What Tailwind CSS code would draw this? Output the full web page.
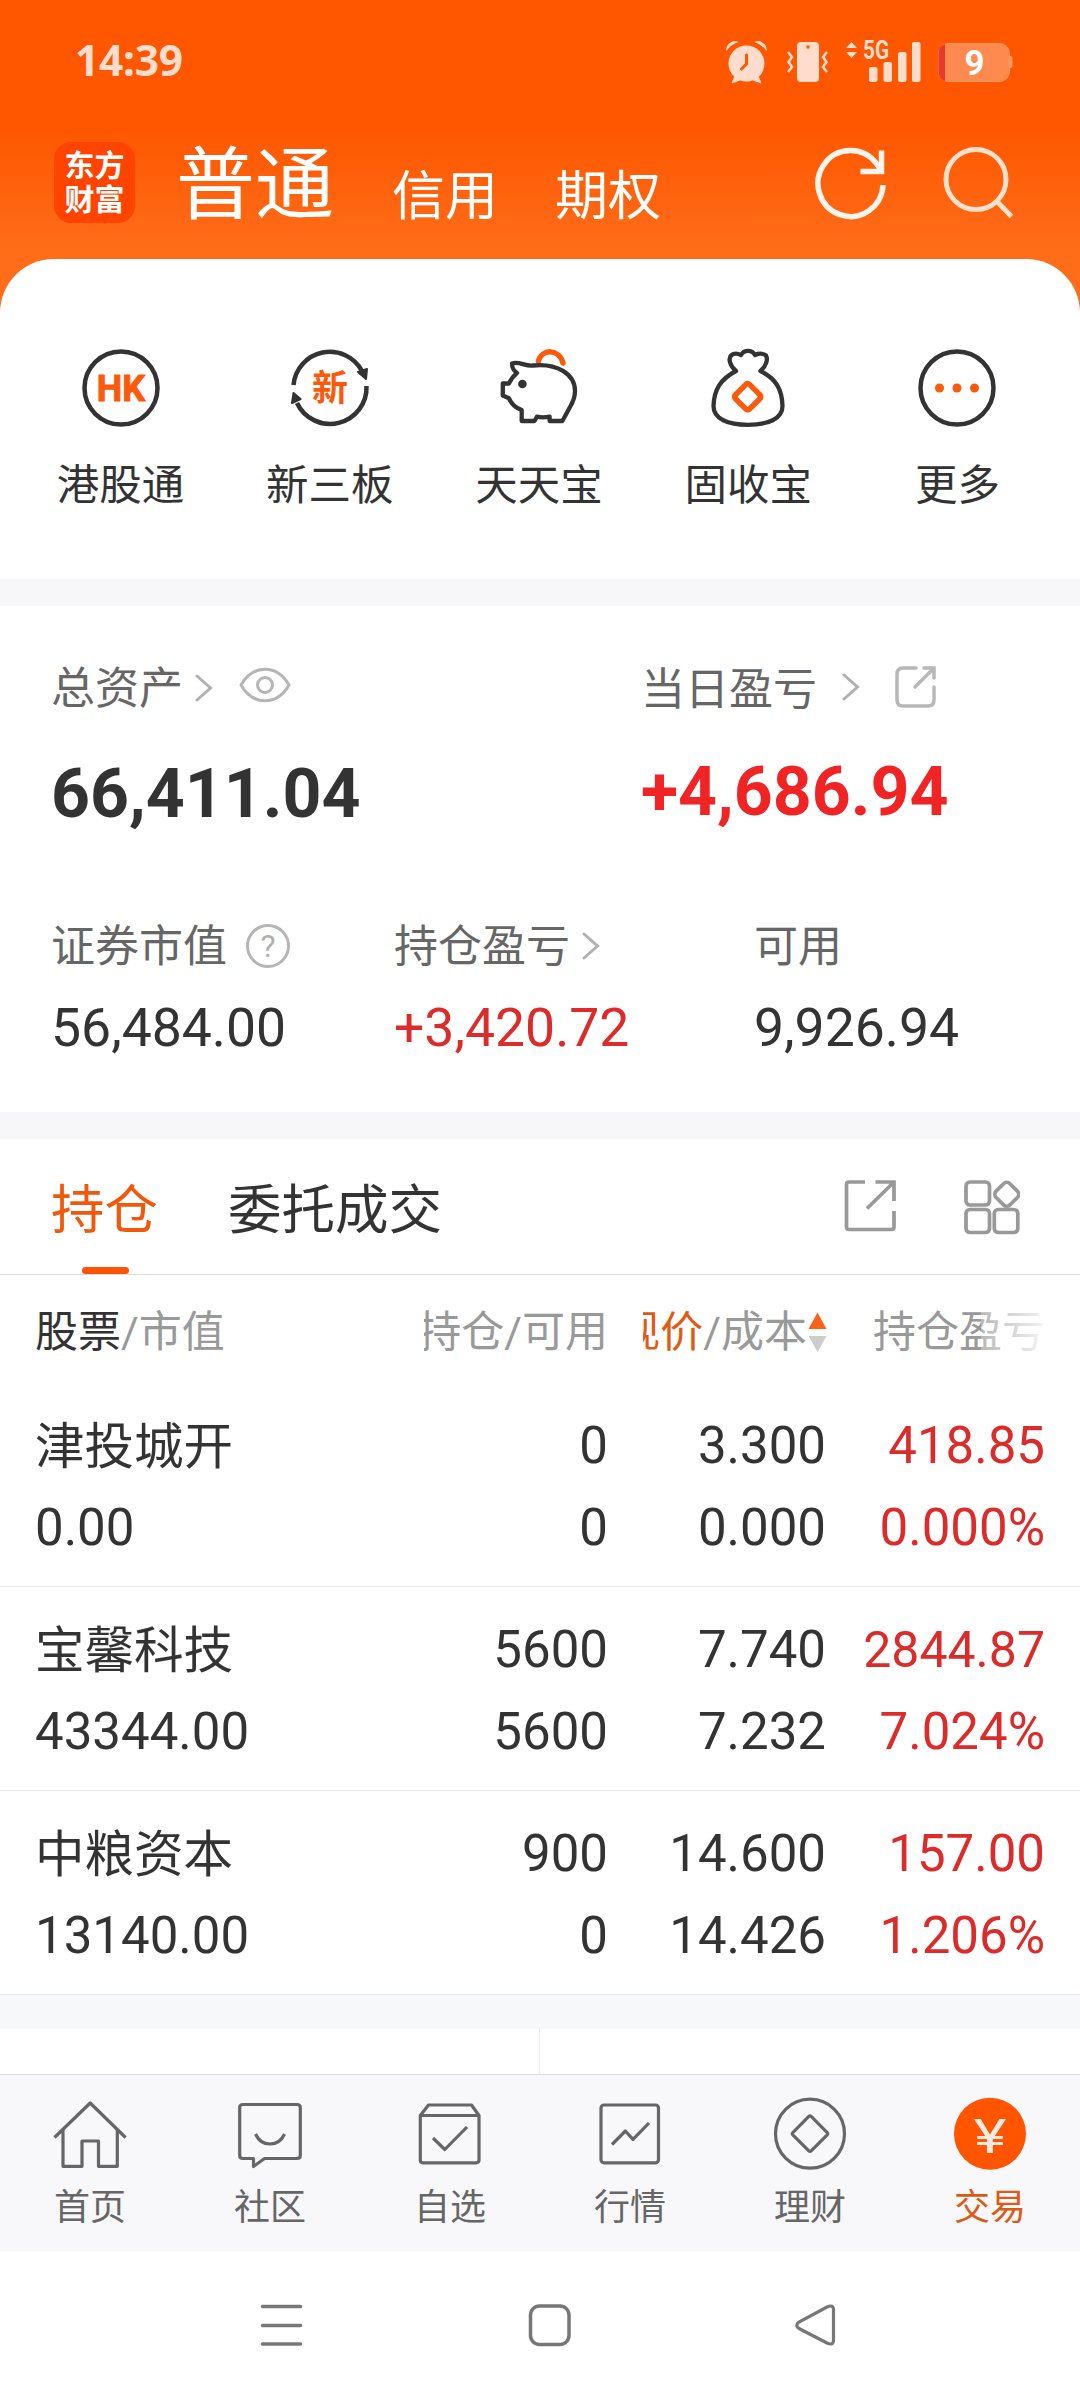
<!DOCTYPE html>
<html lang="zh">
<head>
  <meta charset="UTF-8">
  <meta name="viewport" content="width=device-width, initial-scale=1.0">
  <title>交易</title>
  <script src="https://cdn.jsdelivr.net/npm/@tailwindcss/browser@4"></script>
</head>
<body class="bg-white text-[#333] font-[Roboto,'Noto_Sans_CJK_SC',sans-serif] w-[1080px] h-[2400px] overflow-hidden">

  <div class="h-[579px] bg-[linear-gradient(to_bottom,#ff5600_125px,#ff6d19_250px)]">
    <!-- 状态栏 -->
    <div class="h-[123px] flex items-center justify-between pl-[75px] pr-[66px]">
      <div class="text-[42.5px] leading-none font-bold text-[#ffdccb] font-['Noto_Sans',sans-serif] tracking-[-0.3px] pb-[3px]">14:39</div>
      <div class="flex items-center text-[#ffdccb]">
        <svg class="w-[46px] h-[48px]" viewBox="0 0 46 48" fill="currentColor">
          <circle cx="22.500" cy="25.500" r="18"/>
          <path d="M2.500 13Q1.500 8 6 5Q10 1.500 14.500 4Q6 7 2.500 13ZM42.500 13Q43.500 8 39 5Q35 1.500 30.500 4Q39 7 42.500 13Z"/>
          <path d="M11 38L8 45L16 42ZM34 38L37 45L29 42Z" stroke="currentColor" stroke-linejoin="round"/>
          <path d="M22.500 17V26L17.500 31" fill="none" stroke="#ff5600" stroke-width="3" stroke-linecap="round"/>
        </svg>
        <svg class="w-[44px] h-[48px] ml-[16px]" viewBox="0 0 44 48" fill="currentColor">
          <rect x="11" y="4" width="22" height="40" rx="4"/>
          <circle cx="22" cy="9" r="1.700" fill="#ff5600"/>
          <path d="M2 14L6 19L2.500 24L6 29L2 34M41 14L37 19L40.500 24L37 29L41 34" fill="none" stroke="currentColor" stroke-width="2.500"/>
        </svg>
        <svg class="w-[80px] h-[48px] ml-[14px] overflow-visible" viewBox="0 0 80 48" fill="currentColor">
          <path d="M2 10L7.500 4L13 10ZM2 14L7.500 20L13 14Z"/>
          <text x="19" y="21" font-size="25" font-weight="700" textLength="26" lengthAdjust="spacingAndGlyphs">5G</text>
          <rect x="25" y="29" width="8.500" height="15" rx="2"/>
          <rect x="39.500" y="24" width="8.500" height="20" rx="2"/>
          <rect x="54" y="14" width="8.500" height="30" rx="2"/>
          <rect x="68" y="4" width="8.500" height="40" rx="2"/>
        </svg>
        <svg class="w-[78px] h-[48px] ml-[11px] mr-px" viewBox="0 0 78 48">
          <path d="M74 18h1.500q2 0 2 2v8q0 2-2 2H74z" fill="#ff9a66"/>
          <rect x="3.500" y="5.500" width="71" height="38" rx="10" fill="#ff8a4f" stroke="#ff9a66"/>
          <path d="M10 6V43Q3.500 41 3.500 33V16Q3.500 8 10 6Z" fill="#ea3a2c"/>
          <text x="39.500" y="36.500" font-size="35" font-weight="700" text-anchor="middle" fill="#fff">9</text>
        </svg>
      </div>
    </div>

    <!-- 账户切换 -->
    <div class="h-[136px] pb-[17px] flex items-center pl-[54px] text-white">
      <div class="w-[81px] h-[81px] rounded-[17px] bg-[#ff4400] flex flex-col items-center justify-center text-[30px] leading-[34px] font-bold">
        <span>东方</span>
        <span>财富</span>
      </div>
      <div class="ml-[41px] mt-[8px] text-[79px] leading-none">普通</div>
      <div class="ml-[58px] mt-[29px] text-[53px] leading-none">信用</div>
      <div class="ml-[57px] mt-[29px] text-[53px] leading-none">期权</div>
      <svg class="w-[80px] h-[80px] ml-[149px] mb-px" viewBox="0 0 80 80" fill="none" stroke="#fff4ea" stroke-width="5.500">
        <path d="M73 43A32.500 33 0 1 1 66 21L71 28"/>
        <path d="M71.500 8.500V29.500H50.500"/>
      </svg>
      <svg class="w-[80px] h-[80px] ml-[48px] mb-px" viewBox="0 0 80 80" fill="none" stroke="#ffe0cb" stroke-width="5">
        <circle cx="38" cy="37.500" r="30"/>
        <path d="M58 58.500L73.500 74.500"/>
      </svg>
    </div>

    <!-- 快捷入口 -->
    <div class="h-[320px] bg-white rounded-t-[54px] pl-[16px] pr-[18px] pt-[87px] grid grid-cols-5 text-[42.5px] leading-[60px]">
      <div class="flex flex-col items-center">
        <svg class="w-[84px] h-[84px]" viewBox="0 0 84 84">
          <circle cx="42" cy="42" r="36.500" fill="none" stroke="#333" stroke-width="4.500"/>
          <text x="42" y="55" font-size="36" font-weight="700" text-anchor="middle" fill="#fb5a0c" stroke="#fb5a0c" stroke-linejoin="round">HK</text>
        </svg>
        <span class="mt-[26px]">港股通</span>
      </div>
      <div class="flex flex-col items-center">
        <svg class="w-[84px] h-[84px]" viewBox="0 0 84 84">
          <path d="M5.500 39A36.500 36.500 0 0 1 74 25M78.500 40A36.500 36.500 0 0 1 9 57" fill="none" stroke="#333" stroke-width="4.500"/>
          <path d="M70 26L79 23L78 33ZM4 57L5.500 47L12.600 53Z" fill="#333" stroke="#333" stroke-width="2" stroke-linejoin="round"/>
          <text x="42" y="55" font-size="36" font-weight="700" text-anchor="middle" fill="#fb5a0c">新</text>
        </svg>
        <span class="mt-[26px]">新三板</span>
      </div>
      <div class="flex flex-col items-center">
        <svg class="w-[84px] h-[84px]" viewBox="0 0 84 84" fill="none" stroke="#333" stroke-width="4.300" stroke-linejoin="round">
          <path d="M41.500 15C45 2.500 62 2.500 66 17" stroke="#fb5a0c" stroke-width="5.500" stroke-linecap="round"/>
          <path d="M15 17.500C22 15 28 20.500 36 19.500C60 17 78 28 78 45C78 52 76 56 73 61L65.400 75H52.600V70.700C48 71.500 44 71.500 40 70.700L37.500 75H24.700V64C19 62 14 57 12 52.300L5.800 49.500V37.500H12C14 33 16 30 20 27C16 24 15 22 15 17.500Z"/>
          <circle cx="25.400" cy="38" r="4.300" fill="#333" stroke="none"/>
        </svg>
        <span class="mt-[26px]">天天宝</span>
      </div>
      <div class="flex flex-col items-center">
        <svg class="w-[84px] h-[84px]" viewBox="0 0 84 84" fill="none" stroke="#333" stroke-width="4.300" stroke-linejoin="round">
          <path d="M30 25C24 20 22 13 25 9.500C28 7 32 7.500 35 9C38 3.500 46 3.500 49 9C52 7.500 57 7 60 9.500C62 13 60.500 20 54.500 25C70 33 76 43 76.500 60C76.500 73 62 78.800 42 78.800C22 78.800 7.500 73 7.500 60C8 43 15 33 30 25Z"/>
          <rect x="31.700" y="40.700" width="20" height="20" rx="2.500" transform="rotate(45 41.700 50.700)" stroke="#fb5a0c" stroke-width="5.500"/>
        </svg>
        <span class="mt-[26px]">固收宝</span>
      </div>
      <div class="flex flex-col items-center">
        <svg class="w-[84px] h-[84px]" viewBox="0 0 84 84">
          <circle cx="42" cy="42" r="36.500" fill="none" stroke="#333" stroke-width="4.500"/>
          <g fill="#fb5a0c">
            <circle cx="24.500" cy="42" r="4.500"/>
            <circle cx="42" cy="42" r="4.500"/>
            <circle cx="59.500" cy="42" r="4.500"/>
          </g>
        </svg>
        <span class="mt-[26px]">更多</span>
      </div>
    </div>
  </div>

  <div class="h-[27px] bg-[#f7f7fa]"></div>

  <!-- 资产 -->
  <div class="h-[506px] pl-[51px] pt-[52px]">
    <div class="grid grid-cols-[590px_1fr]">
      <div>
        <div class="h-[60px] flex items-center text-[44px] leading-none text-[#666]">
          <span class="mt-[2px]">总资产</span>
          <svg class="w-[18px] h-[28px] ml-[12px]" viewBox="0 0 18 28" fill="none" stroke="#b0b0b0" stroke-width="3" stroke-linecap="round"><path d="M2 2L15.500 14L2 26"/></svg>
          <svg class="w-[52px] h-[36px] ml-[26px] mb-[6px]" viewBox="0 0 52 36" fill="none" stroke="#b5b5b5" stroke-width="3">
            <path d="M2 18C14 -3 38 -3 50 18C38 39 14 39 2 18Z" stroke-linejoin="round"/>
            <circle cx="26" cy="18" r="7.500"/>
          </svg>
        </div>
        <div class="mt-[36px] h-[80px] leading-[80px] text-[68px] font-bold">66,411.04</div>
      </div>
      <div>
        <div class="h-[60px] flex items-center text-[44px] leading-none text-[#666]">
          <span class="mt-[3px]">当日盈亏</span>
          <svg class="w-[18px] h-[28px] ml-[25px] mb-[3px]" viewBox="0 0 18 28" fill="none" stroke="#b0b0b0" stroke-width="3" stroke-linecap="round"><path d="M2 2L15.500 14L2 26"/></svg>
          <svg class="w-[43px] h-[43px] ml-[34px] mb-[4px]" viewBox="0 0 43 43" fill="none" stroke="#b8b8b8" stroke-width="3.500" stroke-linecap="round">
            <path d="M22 3H9Q3 3 3 9V35Q3 41 9 41H34Q40 41 40 35V22"/>
            <path d="M30 3H40V13M40 3L21 22"/>
          </svg>
        </div>
        <div class="mt-[34px] h-[80px] leading-[80px] text-[68px] font-bold text-[#f02424]">+4,686.94</div>
      </div>
    </div>
    <div class="mt-[82px] grid grid-cols-[343px_360px_1fr]">
      <div>
        <div class="h-[60px] flex items-center text-[44px] leading-none text-[#666]">
          <span class="mt-[2px]">证券市值</span>
          <svg class="w-[46px] h-[46px] ml-[18px]" viewBox="0 0 46 46">
            <circle cx="23" cy="23" r="20.500" fill="none" stroke="#b5b5b5" stroke-width="3"/>
            <text x="23" y="34" font-size="32" text-anchor="middle" fill="#b0b0b0">?</text>
          </svg>
        </div>
        <div class="mt-[22px] h-[60px] leading-[60px] text-[53.5px]">56,484.00</div>
      </div>
      <div>
        <div class="h-[60px] flex items-center text-[44px] leading-none text-[#666]">
          <span class="mt-[2px]">持仓盈亏</span>
          <svg class="w-[18px] h-[28px] ml-[12px]" viewBox="0 0 18 28" fill="none" stroke="#b0b0b0" stroke-width="3" stroke-linecap="round"><path d="M2 2L15.500 14L2 26"/></svg>
        </div>
        <div class="mt-[22px] h-[60px] leading-[60px] text-[53.5px] text-[#dc2b2b]">+3,420.72</div>
      </div>
      <div>
        <div class="h-[60px] flex items-center text-[44px] leading-none text-[#666]"><span class="mt-[2px]">可用</span></div>
        <div class="mt-[22px] h-[60px] leading-[60px] text-[53.5px]">9,926.94</div>
      </div>
    </div>
  </div>

  <div class="h-[27px] bg-[#f7f7fa]"></div>

  <!-- 标签 -->
  <div class="h-[136px] border-b border-[#dcdcdc] flex items-center pl-[51px] text-[53.5px] leading-none">
    <div class="relative h-full flex items-center pt-[9px] text-[#f1580c]">
      持仓
      <div class="absolute bottom-0 left-[31px] w-[47px] h-[7px] rounded-full bg-[#fb5505]"></div>
    </div>
    <div class="ml-[70px] pt-[9px]">委托成交</div>
    <svg class="w-[56px] h-[56px] ml-[400px] mb-[4px]" viewBox="0 0 56 56" fill="none" stroke="#999" stroke-width="3.700">
      <path d="M23 5H7Q4.500 5 4.500 7.500V50Q4.500 52.500 7 52.500H49.500Q52 52.500 52 50V34"/>
      <path d="M33.500 5H52V24M51 6L25 31.500"/>
    </svg>
    <svg class="w-[58px] h-[58px] ml-[64px]" viewBox="0 0 58 58" fill="none" stroke="#999" stroke-width="3.700">
      <rect x="4" y="4" width="23.500" height="23" rx="4"/>
      <rect x="4" y="31.500" width="23.500" height="23" rx="4"/>
      <rect x="32.300" y="31.500" width="23.500" height="23" rx="4"/>
      <rect x="35" y="6.500" width="19.500" height="19.500" rx="4.500" transform="rotate(45 44.700 16.300)"/>
    </svg>
  </div>

  <!-- 表头 -->
  <div class="h-[108px] pl-[35px] grid grid-cols-[365px_208px_219px_218px] items-start pt-[27px] text-[43px] leading-[60px] text-[#999] whitespace-nowrap">
    <div><span class="text-[#333]">股票</span>/市值</div>
    <div class="w-[184px] ml-auto flex justify-end overflow-hidden">持仓/可用</div>
    <div class="w-[184px] ml-auto flex justify-end items-center overflow-hidden">
      <span class="text-[#e05a14]">现价</span>/成本
      <svg class="shrink-0 w-[19px] h-[42px] ml-px" viewBox="0 0 19 42">
        <path d="M9.500 1.500L18.500 18H0.500Z" fill="#f8621a"/>
        <path d="M9.500 41L18.500 25H0.500Z" fill="#ccc"/>
      </svg>
    </div>
    <div class="text-right relative">
      持仓盈亏
      <div class="absolute right-0 top-0 w-[64px] h-full bg-linear-to-r from-white/30 to-white/90"></div>
    </div>
  </div>

  <!-- 持仓列表 -->
  <div id="holdings"></div>

  <div class="h-[34px] bg-[#f7f8fa]"></div>
  <div class="h-[45px] grid grid-cols-2">
    <div class="border-r border-[#ececec]"></div>
    <div></div>
  </div>

  <!-- 底部导航栏 -->
  <div class="h-[177px] bg-[#f8f8fa] border-t border-[#ddd] grid grid-cols-6 text-[36px] leading-[50px] text-[#666]">
    <a class="flex flex-col items-center pt-[19px]">
      <svg class="w-[80px] h-[80px]" viewBox="0 0 80 80" fill="none" stroke="currentColor" stroke-width="3.200">
        <path d="M4.500 43.500L40.200 9L75.500 43.500M13 36V72.300H32V47H48.500V72.300H67.300V36" stroke-linejoin="round"/>
      </svg>
      <span class="mt-[9px]">首页</span>
    </a>
    <a class="flex flex-col items-center pt-[19px]">
      <svg class="w-[80px] h-[80px]" viewBox="0 0 80 80" fill="none" stroke="currentColor" stroke-width="3.200" stroke-linejoin="round">
        <path d="M13 10.500H67Q70.300 10.500 70.300 13.500V61.500Q70.300 64.500 67 64.500H34.500L23.500 72.500V64.500H13Q9.700 64.500 9.700 61.500V13.500Q9.700 10.500 13 10.500Z"/>
        <path d="M25.500 40Q30 50 40 50Q50 50 54.500 40"/>
      </svg>
      <span class="mt-[9px]">社区</span>
    </a>
    <a class="flex flex-col items-center pt-[19px]">
      <svg class="w-[80px] h-[80px]" viewBox="0 0 80 80" fill="none" stroke="currentColor" stroke-width="3.200" stroke-linejoin="round">
        <path d="M10.300 21.500L18.500 11H61.500L69 21.500V66Q69 68.800 66 68.800H13Q10.300 68.800 10.300 66ZM10.300 21.500H69"/>
        <path d="M23 44L34.800 55.500L57 33"/>
      </svg>
      <span class="mt-[9px]">自选</span>
    </a>
    <a class="flex flex-col items-center pt-[19px]">
      <svg class="w-[80px] h-[80px]" viewBox="0 0 80 80" fill="none" stroke="currentColor" stroke-width="3.200" stroke-linejoin="round">
        <rect x="11" y="11" width="57.500" height="57.800" rx="3"/>
        <path d="M22 50.500L35.400 37L43 45.300L59 29"/>
      </svg>
      <span class="mt-[9px]">行情</span>
    </a>
    <a class="flex flex-col items-center pt-[19px]">
      <svg class="w-[80px] h-[80px]" viewBox="0 0 80 80" fill="none" stroke="currentColor" stroke-width="3.200" stroke-linejoin="round">
        <circle cx="40" cy="39.700" r="34.500"/>
        <rect x="27" y="26.700" width="26" height="26" rx="2" transform="rotate(45 40 39.700)"/>
      </svg>
      <span class="mt-[9px]">理财</span>
    </a>
    <a class="flex flex-col items-center pt-[19px] text-[#dc5a14]">
      <svg class="w-[80px] h-[80px]" viewBox="0 0 80 80">
        <circle cx="40" cy="39.700" r="36" fill="#ff5500"/>
        <text x="23.500" y="58.500" font-size="48" textLength="33" lengthAdjust="spacingAndGlyphs" fill="#ffeadf">¥</text>
      </svg>
      <span class="mt-[9px]">交易</span>
    </a>
  </div>

  <!-- 系统导航 -->
  <div class="h-[149px] flex items-center pl-[259px]">
    <svg class="w-[46px] h-[46px]" viewBox="0 0 46 46" stroke="#777" stroke-width="3.500" stroke-linecap="round"><path d="M3.500 3.500H41.500M3.500 22.500H41.500M3.500 41H41.500"/></svg>
    <svg class="w-[46px] h-[46px] ml-[222px]" viewBox="0 0 46 46" fill="none" stroke="#777" stroke-width="3.500"><rect x="3.500" y="3" width="38.500" height="38.500" rx="9"/></svg>
    <svg class="w-[46px] h-[46px] ml-[220px]" viewBox="0 0 46 46" fill="none" stroke="#777" stroke-width="3.200"><path d="M34 4Q40.500 1 40.500 7V37Q40.500 43 34 40L6 25.500Q1.500 22.500 6 19Z"/></svg>
  </div>

  <script>
    const holdings = [
      { name: '津投城开', value: '0.00', amount: '0', usable: '0', price: '3.300', cost: '0.000', profit: '418.85', rate: '0.000%' },
      { name: '宝馨科技', value: '43344.00', amount: '5600', usable: '5600', price: '7.740', cost: '7.232', profit: '2844.87', rate: '7.024%' },
      { name: '中粮资本', value: '13140.00', amount: '900', usable: '0', price: '14.600', cost: '14.426', profit: '157.00', rate: '1.206%' },
    ];

    // 数字较长时缩小字号
    const profitSize = s => s.length > 6 ? 'text-[50px]' : 'text-[51px]';

    // 每只股票两行
    document.getElementById('holdings').innerHTML = holdings.map(h => `
      <div class="h-[204px] pt-[22px] pl-[35px] border-b border-[#ebebeb] grid grid-cols-[365px_208px_218px_219px] grid-rows-[82px_82px] text-[51px] leading-[82px] text-right">
        <div class="text-left text-[49.5px] pt-px">${h.name}</div>
        <div>${h.amount}</div>
        <div>${h.price}</div>
        <div class="text-[#dc2b2b] ${profitSize(h.profit)}">${h.profit}</div>
        <div class="text-left">${h.value}</div>
        <div>${h.usable}</div>
        <div>${h.cost}</div>
        <div class="text-[#dc2b2b]">${h.rate}</div>
      </div>
    `).join('');
  </script>
</body>
</html>
